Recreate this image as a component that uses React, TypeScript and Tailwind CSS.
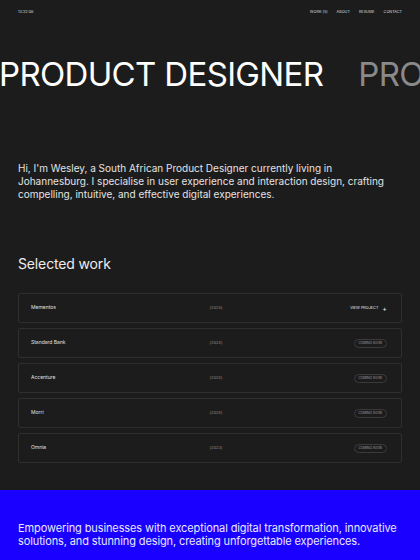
import React from "react";

const works = [
  { name: "Mementos", year: "(2025)", live: true },
  { name: "Standard Bank", year: "(2024)", live: false },
  { name: "Accenture", year: "(2024)", live: false },
  { name: "Morri", year: "(2024)", live: false },
  { name: "Omnia", year: "(2023)", live: false },
];

export default function App() {
  return (
    <div
      className="w-[420px] h-[560px] overflow-hidden bg-[#1c1c1c] text-white flex flex-col"
      style={{ fontFamily: "Inter, 'Noto Sans', sans-serif" }}
    >
      <header className="flex justify-between items-center px-[18px] pt-[7px] h-[16px] text-[3.8px] text-[#d9d9d9]">
        <span>13:22:06</span>
        <nav className="flex gap-[9px]">
          <span>WORK (5)</span>
          <span>ABOUT</span>
          <span>RESUME</span>
          <span>CONTACT</span>
        </nav>
      </header>

      <div className="mt-[38px] flex gap-[35px] whitespace-nowrap -ml-[1px] text-[33px] leading-[40px] tracking-[-0.02em]">
        <span className="text-white">PRODUCT DESIGNER</span>
        <span className="text-[#8a8a8a]">PRODUCT DESIGNER</span>
      </div>

      <p className="mt-[68px] px-[18px] text-[10px] leading-[13px] text-[#e3e3e3]">
        Hi, I'm Wesley, a South African Product Designer currently living in Johannesburg. I specialise in user experience and interaction design, crafting compelling, intuitive, and effective digital experiences.
      </p>

      <h2 className="mt-[54px] px-[18px] text-[14px] leading-[18px] text-[#ececec] tracking-[-0.01em]">
        Selected work
      </h2>

      <div className="mt-[20px] px-[18px] flex flex-col gap-[5px]">
        {works.map((w) => (
          <div
            key={w.name}
            className="h-[30px] border border-[#2f2f2f] rounded-[2px] grid grid-cols-3 items-center px-[12px] text-[5px] text-[#e0e0e0]"
          >
            <span>{w.name}</span>
            <span className="text-center pl-[12px] text-[#8c8c8c] text-[4px]">{w.year}</span>
            <div className="flex justify-end pr-[2px]">
              {w.live ? (
                <span className="flex items-center gap-[4px] text-[3.8px] text-[#e8e8e8]">
                  VIEW PROJECT <span className="text-[7px] leading-none">+</span>
                </span>
              ) : (
                <span className="h-[9px] px-[4px] flex items-center rounded-full border border-[#3a3a3a] text-[3.2px] text-[#a0a0a0]">
                  COMING SOON
                </span>
              )}
            </div>
          </div>
        ))}
      </div>

      <section className="mt-[27px] flex-1 bg-[#1a00ff] px-[18px] pt-[32px]">
        <p className="text-[11px] leading-[13px] text-[#e8e8ff] tracking-[-0.01em]">
          Empowering businesses with exceptional digital transformation, innovative solutions, and stunning design, creating unforgettable experiences.
        </p>
      </section>
    </div>
  );
}
